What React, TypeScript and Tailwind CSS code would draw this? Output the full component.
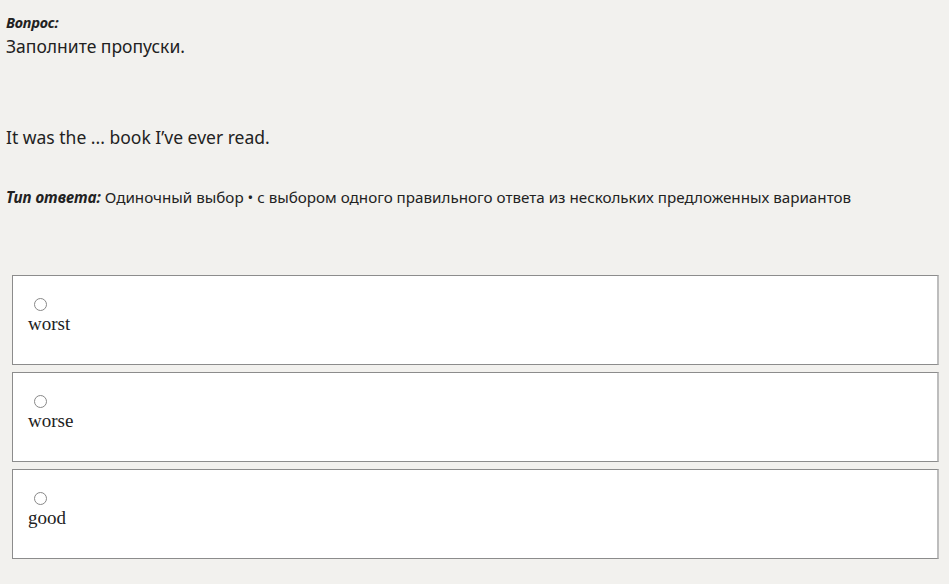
const options = ['worst', 'worse', 'good'];

export default function App() {
  return (
    <div className="min-h-[584px] w-[949px] bg-[#f2f1ee] text-[#222] [font-family:'Noto_Sans',sans-serif]">
      <div className="px-[6px] pt-[12px]">
        <div className="text-[14.5px] font-bold italic leading-[20px] tracking-[-0.2px]">Вопрос:</div>
        <div className="mt-[2px] text-[17.5px] leading-[24px]">Заполните пропуски.</div>
        <div className="mt-[67px] text-[17.5px] leading-[24px]">It was the ... book I’ve ever read.</div>
        <div className="mt-[38px] text-[15.2px] leading-[20px]">
          <span className="font-bold italic">Тип ответа:</span> Одиночный выбор • с выбором одного правильного ответа из нескольких предложенных вариантов
        </div>
      </div>
      <div className="mt-[68px] flex flex-col gap-[7px] pl-[12px] pr-[10px] pb-[26px]">
        {options.map((o) => (
          <label
            key={o}
            className="flex h-[90px] flex-col border border-[#8c8c8c] border-r-[#bdbdbd] border-r-2 bg-white px-[15px] pt-[22px]"
          >
            <span className="ml-[6px] block h-[13px] w-[13px] rounded-full border border-[#888]" />
            <span className="mt-[2px] text-[19px] leading-[22px] text-[#222] [font-family:'Liberation_Serif',serif]">{o}</span>
          </label>
        ))}
      </div>
    </div>
  );
}
